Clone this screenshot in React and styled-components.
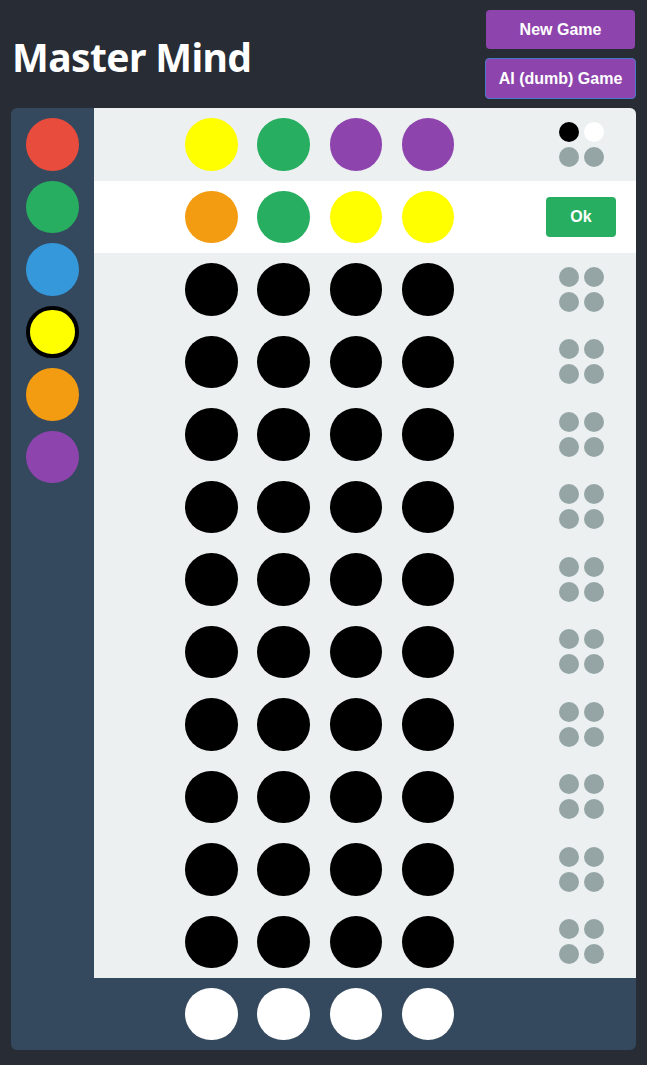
import React from "react";
import styled, { createGlobalStyle } from "styled-components";

const GlobalStyle = createGlobalStyle`
  html, body {
    margin: 0;
    padding: 0;
    background-color: #282c34;
    font-family: "Liberation Sans", Arial, sans-serif;
  }
`;

const COLORS = {
  red: "#e74c3c",
  green: "#27ae60",
  blue: "#3498db",
  yellow: "#ffff00",
  orange: "#f39c12",
  purple: "#8e44ad",
  black: "#000000",
  white: "#ffffff",
};

const Page = styled.div`
  padding: 0 11px 15px 11px;
`;

const Header = styled.header`
  display: flex;
  justify-content: space-between;
  align-items: center;
  height: 108px;
`;

const Title = styled.h1`
  margin: 0;
  padding-left: 1px;
  padding-top: 4px;
  font-family: "Noto Sans", sans-serif;
  font-size: 39px;
  font-weight: 700;
  letter-spacing: -0.6px;
  color: white;
`;

const Buttons = styled.div`
  display: flex;
  flex-direction: column;
  align-items: flex-end;
  gap: 9px;
  padding-top: 1px;
`;

const Button = styled.button`
  box-sizing: border-box;
  height: ${(p) => (p.focused ? "41px" : "39px")};
  width: ${(p) => (p.focused ? "151px" : "149px")};
  margin-right: ${(p) => (p.focused ? "0" : "1px")};
  border: ${(p) => (p.focused ? "1px solid #4a78c8" : "none")};
  border-radius: 4px;
  background-color: #8e44ad;
  color: white;
  font-family: "Liberation Sans", Arial, sans-serif;
  font-size: 16px;
  font-weight: 700;
  cursor: pointer;
`;

const Board = styled.div`
  display: grid;
  grid-template-columns: 83px 1fr;
  grid-template-rows: 870px 72px;
  background-color: #34495e;
  border-radius: 6px;
  overflow: hidden;
`;

const Palette = styled.div`
  display: flex;
  flex-direction: column;
  align-items: center;
  gap: 10px;
  padding-top: 10px;
`;

const Peg = styled.div`
  width: 52.5px;
  height: 52.5px;
  border-radius: 50%;
  box-sizing: border-box;
  background-color: ${(p) => p.color};
  border: ${(p) => (p.selected ? "4px solid black" : "none")};
  flex-shrink: 0;
`;

const Rows = styled.div`
  background-color: #ecf0f1;
  display: flex;
  flex-direction: column;
`;

const Row = styled.div`
  display: flex;
  align-items: center;
  height: 72.5px;
  padding-left: 81px;
  background-color: ${(p) => (p.active ? "white" : "transparent")};
`;

const PegSlots = styled.div`
  display: flex;
  gap: 19.8px;
  width: 290px;
  padding-left: 10px;
`;

const Feedback = styled.div`
  margin-left: auto;
  margin-right: 20px;
  width: 70px;
  display: flex;
  justify-content: center;
`;

const FeedbackGrid = styled.div`
  display: grid;
  grid-template-columns: 20px 20px;
  gap: 5px;
`;

const Hint = styled.div`
  width: 20px;
  height: 20px;
  border-radius: 50%;
  background-color: ${(p) => p.color};
`;

const OkButton = styled.button`
  width: 70px;
  height: 40px;
  border: none;
  border-radius: 4px;
  background-color: #27ae60;
  color: white;
  font-family: "Liberation Sans", Arial, sans-serif;
  font-size: 16px;
  font-weight: 700;
`;

const Secret = styled.div`
  grid-column: 2;
  display: flex;
  align-items: center;
  padding-left: 81px;
`;

const palette = ["red", "green", "blue", "yellow", "orange", "purple"];

const guesses = [
  { pegs: ["yellow", "green", "purple", "purple"], hints: ["black", "white", "grey", "grey"] },
  { pegs: ["orange", "green", "yellow", "yellow"], active: true },
  ...Array.from({ length: 10 }, () => ({
    pegs: ["black", "black", "black", "black"],
    hints: ["grey", "grey", "grey", "grey"],
  })),
];

const hintColor = (h) =>
  h === "black" ? "#000" : h === "white" ? "#fff" : "#95a5a6";

export default function App() {
  return (
    <Page>
      <GlobalStyle />
      <Header>
        <Title>Master Mind</Title>
        <Buttons>
          <Button>New Game</Button>
          <Button focused>AI (dumb) Game</Button>
        </Buttons>
      </Header>
      <Board>
        <Palette>
          {palette.map((c) => (
            <Peg key={c} color={COLORS[c]} selected={c === "yellow"} />
          ))}
        </Palette>
        <Rows>
          {guesses.map((g, i) => (
            <Row key={i} active={g.active}>
              <PegSlots>
                {g.pegs.map((c, j) => (
                  <Peg key={j} color={COLORS[c]} />
                ))}
              </PegSlots>
              <Feedback>
                {g.active ? (
                  <OkButton>Ok</OkButton>
                ) : (
                  <FeedbackGrid>
                    {g.hints.map((h, j) => (
                      <Hint key={j} color={hintColor(h)} />
                    ))}
                  </FeedbackGrid>
                )}
              </Feedback>
            </Row>
          ))}
        </Rows>
        <Secret>
          <PegSlots>
            {[0, 1, 2, 3].map((j) => (
              <Peg key={j} color="#fff" />
            ))}
          </PegSlots>
        </Secret>
      </Board>
    </Page>
  );
}
